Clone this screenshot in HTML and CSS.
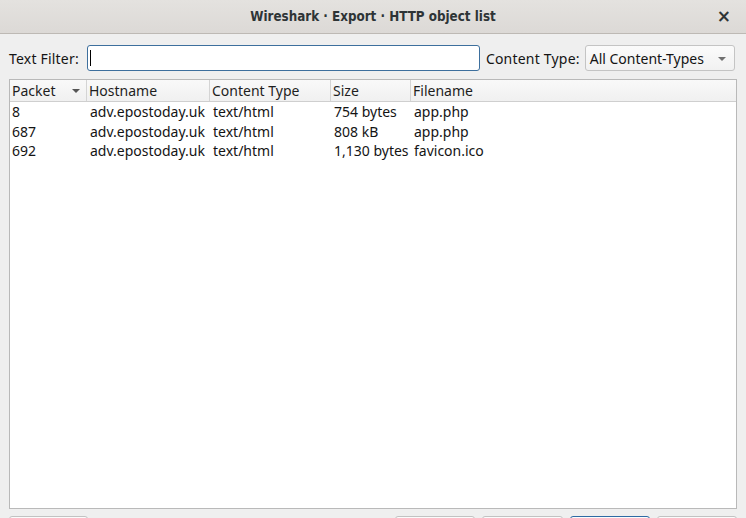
FILE: index.html
```html
<!DOCTYPE html>
<html>
<head>
<meta charset="utf-8">
<link rel="stylesheet" href="styles.css">
</head>
<body>
<div class="window">
  <div class="titlebar">
    <span class="title">Wireshark · Export · HTTP object list</span>
    <span class="close">×</span>
  </div>
  <div class="content">
    <div class="filters">
      <label class="lbl lbl1">Text Filter:</label>
      <div class="input"><span class="caret"></span></div>
      <label class="lbl lbl2">Content Type:</label>
      <div class="combo"><span>All Content-Types</span><span class="arrow"></span></div>
    </div>
    <div class="table">
      <div class="thead">
        <div class="th c1">Packet<span class="sort"></span></div>
        <div class="th c2">Hostname</div>
        <div class="th c3">Content Type</div>
        <div class="th c4">Size</div>
        <div class="th c5">Filename</div>
      </div>
      <div class="tbody">
        <div class="tr"><div class="td c1">8</div><div class="td c2">adv.epostoday.uk</div><div class="td c3">text/html</div><div class="td c4">754 bytes</div><div class="td c5">app.php</div></div>
        <div class="tr"><div class="td c1">687</div><div class="td c2">adv.epostoday.uk</div><div class="td c3">text/html</div><div class="td c4">808 kB</div><div class="td c5">app.php</div></div>
        <div class="tr"><div class="td c1">692</div><div class="td c2">adv.epostoday.uk</div><div class="td c3">text/html</div><div class="td c4">1,130 bytes</div><div class="td c5">favicon.ico</div></div>
      </div>
    </div>
    <div class="buttons">
      <div class="btn b0"></div>
      <div class="spacer"></div>
      <div class="btn b1"></div>
      <div class="btn b2"></div>
      <div class="btn b3 default"></div>
      <div class="btn b4"></div>
    </div>
  </div>
</div>
</body>
</html>
```
FILE: styles.css
```css
html, body { margin: 0; padding: 0; }
body {
  width: 746px; height: 518px; overflow: hidden;
  background: #efefef;
  font-family: "Noto Sans", "Open Sans", sans-serif;
  font-size: 14px;
  color: #141414;
}
.window { display: flex; flex-direction: column; height: 518px; }
.titlebar {
  height: 33px;
  flex: none;
  background: linear-gradient(#e4e2df, #dcd9d6);
  border-bottom: 1px solid #bdb9b4;
  display: flex; align-items: center; justify-content: center;
  position: relative;
}
.title {
  font-family: "DejaVu Sans Condensed", "DejaVu Sans", sans-serif;
  font-stretch: condensed;
  font-weight: bold;
  font-size: 13.3px;
  color: #2e3436;
}
.close {
  position: absolute; right: 15px; top: 6px;
  font-family: "DejaVu Sans", sans-serif;
  font-weight: bold; font-size: 17px; color: #2e3436;
}
.content { padding: 11px 9px 0 9px; display: flex; flex-direction: column; flex: 1; }
.filters { display: flex; align-items: center; height: 26px; }
.lbl { flex: none; white-space: nowrap; letter-spacing: 0.2px; }
.lbl1 { margin-right: 8px; }
.lbl2 { margin-left: 6px; margin-right: 5px; }
.input {
  flex: none;
  width: 391px; height: 24px;
  background: #fff;
  border: 1px solid #3d6f9d;
  border-radius: 3px;
  position: relative;
}
.caret { position: absolute; left: 2px; top: 4px; width: 1px; height: 16px; background: #000; }
.combo {
  flex: none;
  height: 24px;
  border: 1px solid #c4c4c4; border-radius: 3px;
  background: linear-gradient(#fbfbfb, #f1f1f1);
  display: flex; align-items: center; padding-left: 4px; box-sizing: content-box;
  width: 144px; position: relative;
  white-space: nowrap;
}
.arrow {
  position: absolute; right: 8px; top: 11px;
  width: 0; height: 0;
  border-left: 4px solid transparent; border-right: 4px solid transparent;
  border-top: 4px solid #707070;
}
.table {
  margin-top: 8px;
  height: 430px;
  border: 1px solid #b9b9b9;
  background: #fff;
  box-sizing: border-box;
  width: 728px;
}
.thead {
  display: flex; height: 21px;
  background: linear-gradient(#f9f9f9, #f0f0f0);
  border-bottom: 1px solid #cfcfcf;
}
.th { line-height: 21px; padding-left: 2px; box-sizing: border-box; border-right: 1px solid #d4d4d4; position: relative; color: #1e1e1e; }
.th.c5 { border-right: none; flex: 1; }
.c1 { width: 77px; }
.c2 { width: 123px; }
.c3 { width: 121px; }
.c4 { width: 80px; }
.c5 { flex: 1; }
.sort {
  position: absolute; right: 6px; top: 9px;
  border-left: 4px solid transparent; border-right: 4px solid transparent;
  border-top: 4px solid #555;
}
.tr { display: flex; height: 19.5px; line-height: 19.5px; }
.td { padding-left: 2px; box-sizing: border-box; white-space: nowrap; }
.td.c2, .td.c3, .td.c4, .td.c5 { padding-left: 3px; }
.buttons { display: flex; margin-top: 7px; gap: 7px; }
.spacer { flex: 1; }
.btn {
  height: 26px;
  border: 1px solid #c2c2c2; border-radius: 3px;
  background: linear-gradient(#fbfbfb, #f0f0f0);
  box-sizing: border-box;
}
.b0 { width: 79px; }
.b1 { width: 80px; }
.b2 { width: 81px; }
.b3 { width: 80px; }
.b4 { width: 80px; }
.btn.default { border-color: #2f6aa3; }
```
